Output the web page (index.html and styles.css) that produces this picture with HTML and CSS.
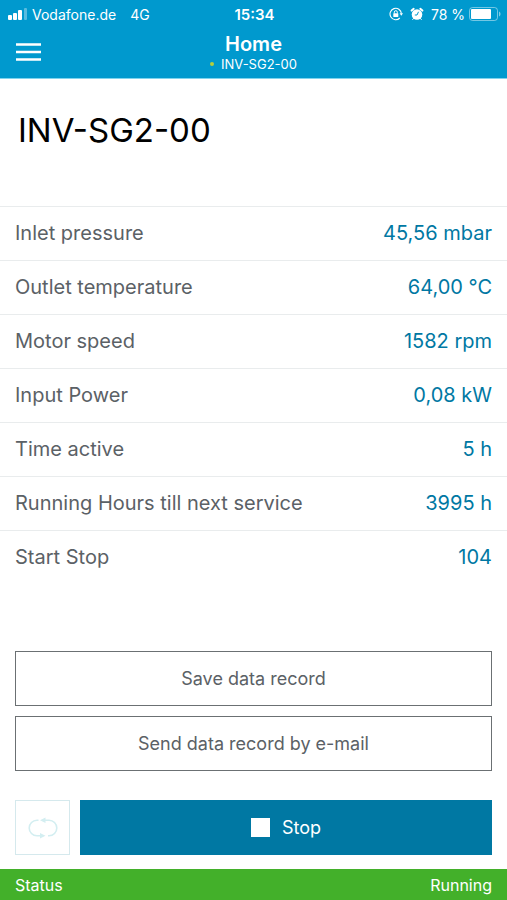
FILE: index.html
```html
<!doctype html>
<html lang="en">
<head>
  <meta charset="utf-8">
  <meta name="viewport" content="width=device-width, initial-scale=1">
  <title>Home</title>
  <link rel="stylesheet" href="styles.css">
</head>
<body>
  <header class="header">
    <div class="phone-bar">
      <div class="phone-left">
        <svg class="signal" width="20" height="12" viewBox="0 0 20 12" fill="#fff" aria-hidden="true">
          <rect x="0" y="7" width="4" height="5" rx="1"/>
          <rect x="5" y="5" width="4" height="7" rx="1"/>
          <rect x="10" y="2" width="4" height="10" rx="1"/>
          <rect x="16" y="0" width="3" height="12" rx="1" opacity=".35"/>
        </svg>
        <span class="carrier">Vodafone.de</span>
        <span>4G</span>
      </div>
      <span class="clock">15:34</span>
      <div class="phone-right">
        <svg width="14" height="14" viewBox="0 0 14 14" fill="none" stroke="#fff" aria-hidden="true">
          <path d="M10.800 11A5.700 5.700 0 1 1 12.400 6.500" stroke-width="1.100"/>
          <path d="M10.600 6.300h3.400l-1.700 2.400z" fill="#fff" stroke="none"/>
          <rect x="4.300" y="6.300" width="5" height="3.700" rx=".5" fill="#fff" stroke="none"/>
          <path d="M5.300 6.500V5.200a1.500 1.500 0 0 1 3 0v1.300"/>
        </svg>
        <svg width="14" height="14" viewBox="0 0 14 14" fill="#fff" aria-hidden="true">
          <circle cx="7" cy="7.500" r="5.300"/>
          <path d="M1.600 3.600L3.700 1.800M10.300 1.800l2.100 1.800" stroke="#fff" stroke-width="2" stroke-linecap="round"/>
          <path d="M3.500 11.500l-.8 1M10.500 11.500l.8 1" stroke="#fff" stroke-linecap="round"/>
          <path d="M8.500 4.800L7 8H4.800" fill="none" stroke="#0099ce"/>
        </svg>
        <span class="charge">78 %</span>
        <svg width="32" height="14" viewBox="0 0 32 14" aria-hidden="true">
          <rect x=".5" y=".5" width="28" height="13" rx="3" fill="none" stroke="#fff" opacity=".45"/>
          <rect x="2" y="2" width="20" height="10" rx="1" fill="#fff"/>
          <path d="M30 4.500c2 .8 2 4.200 0 5z" fill="#fff" opacity=".5"/>
        </svg>
      </div>
    </div>
    <div class="nav">
      <button class="menu" type="button" aria-label="Menu">
        <svg width="25" height="20" viewBox="0 0 25 20" fill="none" stroke="#fff" stroke-width="2.500" aria-hidden="true">
          <path d="M0 2.500h25M0 10h25M0 17.500h25"/>
        </svg>
      </button>
      <div class="nav-title">
        <div class="page-name">Home</div>
        <div class="device"><span class="dot"></span>INV-SG2-00</div>
      </div>
    </div>
  </header>

  <main class="content">
    <h1 class="title">INV-SG2-00</h1>

    <table class="values">
      <tr>
        <th scope="row">Inlet pressure</th>
        <td>45,56 mbar</td>
      </tr>
      <tr>
        <th scope="row">Outlet temperature</th>
        <td>64,00 °C</td>
      </tr>
      <tr>
        <th scope="row">Motor speed</th>
        <td>1582 rpm</td>
      </tr>
      <tr>
        <th scope="row">Input Power</th>
        <td>0,08 kW</td>
      </tr>
      <tr>
        <th scope="row">Time active</th>
        <td>5 h</td>
      </tr>
      <tr>
        <th scope="row">Running Hours till next service</th>
        <td>3995 h</td>
      </tr>
      <tr>
        <th scope="row">Start Stop</th>
        <td>104</td>
      </tr>
    </table>

    <div class="actions">
      <button class="button" type="button">Save data record</button>
      <button class="button" type="button">Send data record by e-mail</button>
      <div class="control">
        <button class="button repeat" type="button" aria-label="Repeat" disabled>
          <svg width="30" height="22" viewBox="0 0 30 22" fill="none" stroke="#d3eef1" stroke-width="1.600" aria-hidden="true">
            <path d="M10.500 3.200H9a7.800 7.800 0 0 0 0 15.600h4"/>
            <path d="M15 3.200h6a7.800 7.800 0 0 1 0 15.600h-1"/>
            <path d="M17.500.5v5.400L12 3.200zM12 16.100v5.400l5.500-2.700z" fill="#d3eef1" stroke="none"/>
          </svg>
        </button>
        <button class="button stop" type="button"><span class="stop-icon"></span>Stop</button>
      </div>
    </div>
  </main>

  <footer class="status">
    <span>Status</span>
    <span>Running</span>
  </footer>
</body>
</html>
```

FILE: styles.css
```css
* {
  box-sizing: border-box;
}
body {
  display: flex;
  flex-direction: column;
  min-height: 100vh;
  margin: 0;
  background-color: #fff;
  color: #5b6166;
  font-family: Inter, "Liberation Sans", sans-serif;
  font-size: 20px;
}
svg {
  display: block;
}

/* header */
.header {
  padding-bottom: 6px;
  border-bottom: 1px solid #7fd3ee;
  background-color: #0099ce;
  color: #fff;
}
.phone-bar {
  display: grid;
  grid-template-columns: 1fr auto 1fr;
  align-items: center;
  height: 28px;
  padding: 0 6px 0 8px;
  font-size: 14px;
}
.phone-left,
.phone-right {
  display: flex;
  align-items: center;
}
.signal {
  margin-right: 4px;
}
.carrier {
  margin-right: 14px;
}
.clock {
  font-size: 15px;
  font-weight: 600;
}
.phone-right {
  justify-content: flex-end;
  gap: 7px;
}
.charge {
  margin-right: -3px;
}
.nav {
  display: grid;
  grid-template-columns: 1fr auto 1fr;
  align-items: center;
  padding: 4px 16px 0;
}
.menu {
  justify-self: start;
  padding: 0;
  border: none;
  background: none;
  cursor: pointer;
}
.nav-title {
  text-align: center;
}
.page-name {
  font-size: 20px;
  font-weight: 600;
  line-height: 24px;
}
.device {
  display: flex;
  align-items: center;
  font-size: 13px;
  line-height: 16px;
}
.dot {
  width: 4px;
  height: 4px;
  margin-right: 7px;
  border-radius: 50%;
  background-color: #b5cf3c;
}

/* measured values */
.content {
  display: flex;
  flex: 1;
  flex-direction: column;
}
.title {
  margin: 30px 18px 54px;
  color: #000;
  font-size: 33px;
  font-weight: 400;
  line-height: 43px;
}
.values {
  width: 100%;
  border-collapse: collapse;
}
.values th,
.values td {
  height: 54px;
  padding: 0 15px 2px;
  border-top: 1px solid #e9eced;
  font-weight: 400;
}
.values th {
  text-align: left;
}
.values td {
  color: #0078a3;
  text-align: right;
}

/* buttons */
.actions {
  display: flex;
  flex-direction: column;
  gap: 10px;
  margin-top: auto;
  padding: 30px 15px 14px;
}
.button {
  height: 55px;
  padding: 0 16px;
  border: 1px solid #6b7073;
  background-color: #fff;
  color: #5b6166;
  font-family: inherit;
  font-size: 18px;
  cursor: pointer;
}
.control {
  display: flex;
  gap: 10px;
  margin-top: 19px;
}
.repeat {
  display: flex;
  align-items: center;
  justify-content: center;
  width: 55px;
  padding: 0;
  border-color: #d5e9ed;
  cursor: default;
}
.stop {
  display: flex;
  flex: 1;
  align-items: center;
  justify-content: center;
  gap: 12px;
  border: none;
  background-color: #0078a3;
  color: #fff;
}
.stop-icon {
  width: 19px;
  height: 19px;
  background-color: #fff;
}

/* footer */
.status {
  display: flex;
  align-items: center;
  justify-content: space-between;
  height: 31px;
  padding: 0 15px;
  background-color: #43b02a;
  color: #fff;
  font-size: 16px;
}
```
